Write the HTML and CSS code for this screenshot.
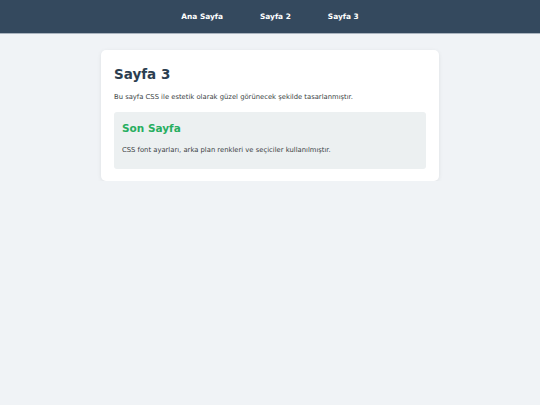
FILE: index.html
```html
<!DOCTYPE html>
<html lang="tr">
<head>
<meta charset="utf-8">
<title>Sayfa 3</title>
<link rel="stylesheet" href="styles.css">
</head>
<body>
<header class="site-header">
  <nav class="nav">
    <a class="nav-link" href="#">Ana Sayfa</a>
    <a class="nav-link" href="#">Sayfa 2</a>
    <a class="nav-link" href="#">Sayfa 3</a>
  </nav>
</header>
<main class="card">
  <h1 class="title">Sayfa 3</h1>
  <p class="text intro">Bu sayfa CSS ile estetik olarak güzel görünecek şekilde tasarlanmıştır.</p>
  <section class="panel">
    <h2 class="panel-title">Son Sayfa</h2>
    <p class="text panel-text">CSS font ayarları, arka plan renkleri ve seçiciler kullanılmıştır.</p>
  </section>
</main>
</body>
</html>
```
FILE: styles.css
```css
html, body {
  margin: 0;
  padding: 0;
}
body {
  background: #f0f3f6;
  font-family: "DejaVu Sans", Verdana, sans-serif;
  color: #333;
}
.site-header {
  height: 33px;
  background: #34495e;
  border-bottom: 1px solid #aab4bf;
  display: flex;
  align-items: center;
  justify-content: center;
}
.nav {
  display: flex;
  gap: 37px;
}
.nav-link {
  color: #ffffff;
  text-decoration: none;
  font-weight: bold;
  font-size: 7.4px;
}
.card {
  display: block;
  box-sizing: border-box;
  width: 338px;
  margin: 16px auto 0;
  padding: 13px 13px 12px;
  background: #ffffff;
  border-radius: 5px;
  box-shadow: 0 1px 4px rgba(0, 0, 0, 0.08);
}
.title {
  margin: 3px 0 0;
  font-size: 13.5px;
  font-weight: bold;
  color: #2c3e50;
}
.text {
  font-size: 6.8px;
  color: #3a3f44;
  margin: 0;
}
.intro {
  margin-top: 11.3px;
}
.panel {
  margin-top: 10.5px;
  background: #ecf0f1;
  border-radius: 3px;
  padding: 10px 8px 15px;
}
.panel-title {
  margin: 0;
  font-size: 10.5px;
  font-weight: bold;
  color: #27ae60;
}
.panel-text {
  margin-top: 11.8px;
}
```
